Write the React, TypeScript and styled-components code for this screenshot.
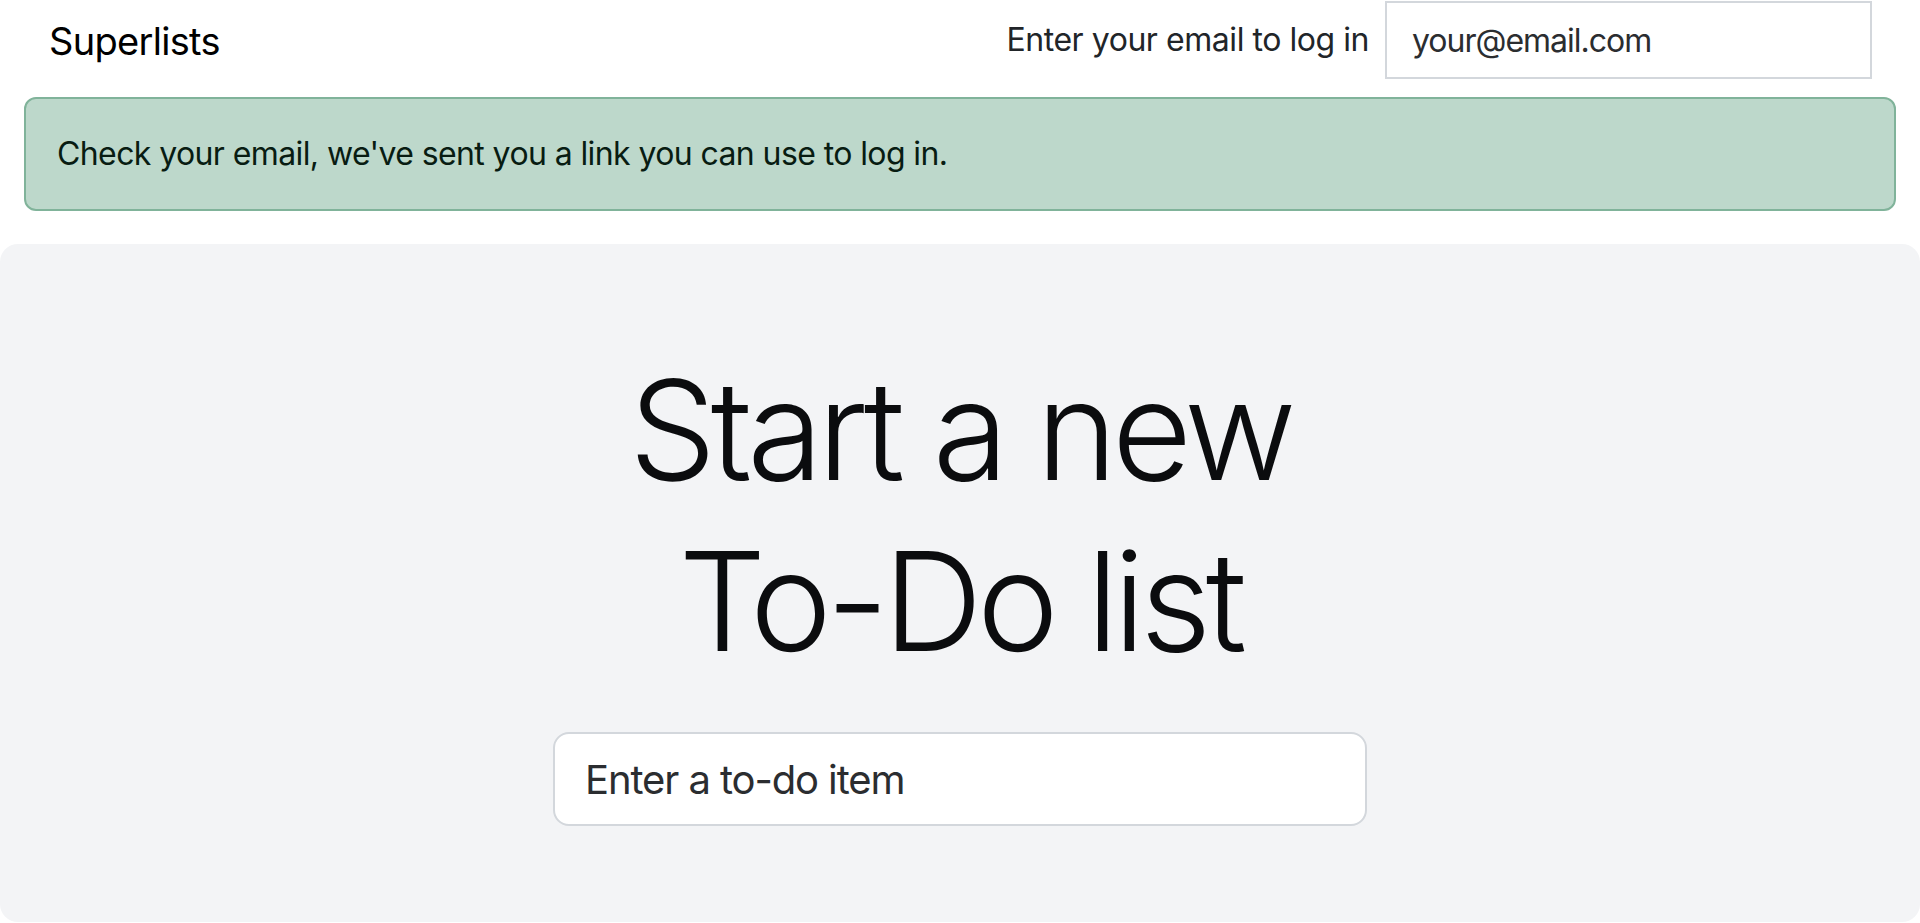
import React from "react";
import styled, { createGlobalStyle } from "styled-components";

const GlobalStyle = createGlobalStyle`
  html, body {
    margin: 0;
    padding: 0;
    background: #ffffff;
    font-family: Inter, "Noto Sans", "Liberation Sans", sans-serif;
    color: #212529;
  }
  * { box-sizing: border-box; }
`;

const Page = styled.div`
  display: flex;
  flex-direction: column;
`;

const NavBar = styled.header`
  height: 80px;
  padding: 0 48px 0 49px;
  display: flex;
  align-items: center;
  justify-content: space-between;
`;

const Brand = styled.a`
  font-size: 38px;
  line-height: 60px;
  padding-top: 2px;
  color: #000;
  text-decoration: none;
  letter-spacing: -0.7px;
`;

const LoginForm = styled.form`
  display: flex;
  align-items: center;
  gap: 16px;
  margin: 0;
`;

const LoginLabel = styled.label`
  font-size: 32px;
  line-height: 48px;
  color: #212529;
  letter-spacing: -0.45px;
`;

const EmailInput = styled.input`
  width: 487px;
  height: 78px;
  padding: 0 24px 0 25px;
  border: 2px solid #d3d7dc;
  border-radius: 0;
  background: #fff;
  font-family: inherit;
  font-size: 32px;
  color: #212529;
  outline: none;
  letter-spacing: -1px;
  &::placeholder {
    color: #2b2d30;
  }
`;

const Alert = styled.div`
  margin: 17px 24px 0;
  padding: 32px 31px;
  border: 2px solid #80b39a;
  border-radius: 12px;
  background: #bdd8cb;
  color: #081c12;
  font-size: 32px;
  line-height: 46px;
  letter-spacing: -0.6px;
`;

const Jumbotron = styled.main`
  margin-top: 33px;
  background: #f3f4f6;
  border-radius: 18px;
  padding: 100px 0 96px;
  display: flex;
  flex-direction: column;
  align-items: center;
`;

const Heading = styled.h1`
  margin: 0 0 46px;
  font-size: 138px;
  line-height: 171px;
  font-weight: 300;
  text-align: center;
  color: #0b0c0e;
  letter-spacing: -5.5px;
`;

const TodoInput = styled.input`
  width: 814px;
  height: 94px;
  padding: 0 30px;
  border: 2px solid #d3d7dc;
  border-radius: 16px;
  background: #fff;
  font-family: inherit;
  font-size: 40px;
  color: #212529;
  outline: none;
  letter-spacing: -1.1px;
  &::placeholder {
    color: #2b2d30;
  }
`;

export default function App() {
  return (
    <Page>
      <GlobalStyle />
      <NavBar>
        <Brand href="#">Superlists</Brand>
        <LoginForm onSubmit={(e) => e.preventDefault()}>
          <LoginLabel htmlFor="id_email">Enter your email to log in</LoginLabel>
          <EmailInput id="id_email" name="email" placeholder="your@email.com" />
        </LoginForm>
      </NavBar>
      <Alert>Check your email, we've sent you a link you can use to log in.</Alert>
      <Jumbotron>
        <Heading>
          Start a new
          <br />
          To-Do list
        </Heading>
        <TodoInput id="id_new_item" name="item_text" placeholder="Enter a to-do item" />
      </Jumbotron>
    </Page>
  );
}
